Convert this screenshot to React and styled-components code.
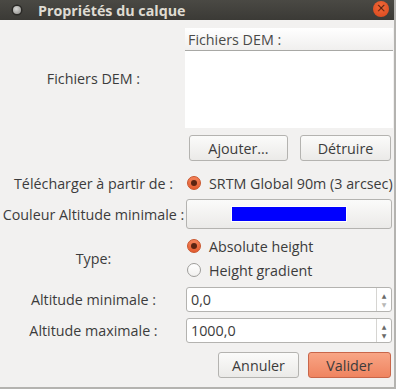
import React from 'react';
import styled, { createGlobalStyle } from 'styled-components';

const GlobalStyle = createGlobalStyle`
    body {
        margin: 0;
        background: #f2f1f0;
        font-family: "Open Sans", "DejaVu Sans", sans-serif;
        font-size: 14.3px;
        color: #3c3c3c;
    }
`;

const App = () => {
    return (
        <>
            <GlobalStyle />
            <Window>
                <TitleBar>
                    <MenuDot />
                    <Title>Propriétés du calque</Title>
                    <CloseBtn>×</CloseBtn>
                </TitleBar>
                <Body>
                    <Row $top={8} $h={100}>
                        <Label>Fichiers DEM :</Label>
                        <ListBox>
                            <ListHeader>Fichiers DEM :</ListHeader>
                        </ListBox>
                    </Row>
                    <Row $top={7} $h={26}>
                        <span />
                        <ButtonPair>
                            <Button $w={99}>Ajouter...</Button>
                            <Button $w={91}>Détruire</Button>
                        </ButtonPair>
                    </Row>
                    <Row $top={11} $h={20}>
                        <Label>Télécharger à partir de :</Label>
                        <RadioList>
                            <RadioItem>
                                <Radio $checked />
                                SRTM Global 90m (3 arcsec)
                            </RadioItem>
                        </RadioList>
                    </Row>
                    <Row $top={7} $h={30}>
                        <Label>Couleur Altitude minimale :</Label>
                        <ColorButton>
                            <Swatch />
                        </ColorButton>
                    </Row>
                    <Row $top={6} $h={46}>
                        <Label>Type:</Label>
                        <RadioList>
                            <RadioItem>
                                <Radio $checked />
                                Absolute height
                            </RadioItem>
                            <RadioItem>
                                <Radio />
                                Height gradient
                            </RadioItem>
                        </RadioList>
                    </Row>
                    <Row $top={6} $h={25}>
                        <Label>Altitude minimale :</Label>
                        <SpinBox>
                            <SpinValue>0,0</SpinValue>
                            <SpinArrows>
                                <Arrow>▲</Arrow>
                                <Arrow $dim>▼</Arrow>
                            </SpinArrows>
                        </SpinBox>
                    </Row>
                    <Row $top={6} $h={25}>
                        <Label>Altitude maximale :</Label>
                        <SpinBox>
                            <SpinValue>1000,0</SpinValue>
                            <SpinArrows>
                                <Arrow>▲</Arrow>
                                <Arrow>▼</Arrow>
                            </SpinArrows>
                        </SpinBox>
                    </Row>
                    <Footer>
                        <Button $w={81}>Annuler</Button>
                        <Button $w={83} $primary>Valider</Button>
                    </Footer>
                </Body>
            </Window>
        </>
    );
};

export default App;

const Window = styled.div`
    width: 396px;
    height: 389px;
    box-sizing: border-box;
    border-right: 2px solid #b4b3b0;
    border-bottom: 2px solid #b4b3b0;
    background: #f2f1f0;
    display: flex;
    flex-direction: column;
    overflow: hidden;
`;

const TitleBar = styled.div`
    height: 20px;
    flex: none;
    margin-right: -2px;
    background: linear-gradient(#4a4944, #3b3a36);
    display: flex;
    align-items: center;
    position: relative;
`;

const MenuDot = styled.div`
    width: 8px;
    height: 8px;
    margin-left: 13px;
    border-radius: 50%;
    background: radial-gradient(circle at 40% 35%, #d8d8d6, #8a8985);
    box-shadow: 0 0 0 1.5px #2a2926;
`;

const Title = styled.div`
    margin-left: 17px;
    font-weight: bold;
    font-size: 14.3px;
    color: #dfdbd2;
`;

const CloseBtn = styled.div`
    position: absolute;
    left: 373px;
    top: 1px;
    width: 16px;
    height: 16px;
    border-radius: 50%;
    background: radial-gradient(circle at 50% 35%, #f26a3a, #d8451b);
    color: #5a1e0c;
    font-size: 12px;
    line-height: 15px;
    text-align: center;
    font-family: "DejaVu Sans", sans-serif;
`;

const Body = styled.div`
    display: flex;
    flex-direction: column;
    padding-right: 1px;
`;

const Row = styled.div`
    display: grid;
    grid-template-columns: 185px 1fr;
    margin-top: ${(p) => p.$top}px;
    height: ${(p) => p.$h}px;
`;

const Label = styled.div`
    display: flex;
    align-items: center;
    justify-content: center;
    white-space: nowrap;
    padding-left: 2px;
`;

const ListBox = styled.div`
    background: #fff;
    display: flex;
    flex-direction: column;
`;

const ListHeader = styled.div`
    height: 23px;
    box-sizing: border-box;
    padding-left: 3px;
    display: flex;
    align-items: center;
    background: linear-gradient(#ffffff, #f0efee);
    border-bottom: 1px solid #a8a8a5;
    color: #4a4a48;
`;

const ButtonPair = styled.div`
    display: flex;
    justify-content: space-between;
    padding: 0 2px 0 4px;
`;

const Button = styled.button`
    width: ${(p) => p.$w}px;
    height: 26px;
    box-sizing: border-box;
    border-radius: 3px;
    border: 1px solid ${(p) => (p.$primary ? '#c8664a' : '#b4b3b0')};
    background: ${(p) =>
        p.$primary
            ? 'linear-gradient(#f8a585, #ef8460)'
            : 'linear-gradient(#fbfbfa, #ebeae8)'};
    font-family: inherit;
    font-size: 14.3px;
    color: #3c3c3c;
    padding: 0;
`;

const RadioList = styled.div`
    display: flex;
    flex-direction: column;
    justify-content: center;
    gap: 2px;
    padding-left: 2px;
`;

const RadioItem = styled.div`
    display: flex;
    align-items: center;
    gap: 8px;
    height: 22px;
    white-space: nowrap;
`;

const Radio = styled.span`
    width: 14px;
    height: 14px;
    flex: none;
    box-sizing: border-box;
    border-radius: 50%;
    position: relative;
    border: 1px solid ${(p) => (p.$checked ? '#c9542b' : '#9e9d9a')};
    background: ${(p) =>
        p.$checked ? 'linear-gradient(#f4835a, #e35c2f)' : 'linear-gradient(#ffffff, #f1f0ee)'};
    &::after {
        content: '';
        display: ${(p) => (p.$checked ? 'block' : 'none')};
        position: absolute;
        left: 3px;
        top: 3px;
        width: 6px;
        height: 6px;
        border-radius: 50%;
        background: #5b2412;
    }
`;

const ColorButton = styled.div`
    margin-left: 1px;
    margin-right: 1px;
    border: 1px solid #b4b3b0;
    border-radius: 3px;
    background: linear-gradient(#fbfbfa, #ebeae8);
    display: flex;
    align-items: center;
    justify-content: center;
`;

const Swatch = styled.div`
    width: 114px;
    height: 14px;
    background: #0000ff;
    outline: 1px solid #fff;
`;

const SpinBox = styled.div`
    margin-left: 1px;
    margin-right: 1px;
    border: 1px solid #b4b3b0;
    border-radius: 3px;
    background: #fff;
    display: flex;
    box-sizing: border-box;
`;

const SpinValue = styled.div`
    flex: 1;
    display: flex;
    align-items: center;
    padding-left: 4px;
    color: #3c3c3c;
`;

const SpinArrows = styled.div`
    width: 14px;
    border-left: 1px solid #d6d5d2;
    display: flex;
    flex-direction: column;
    justify-content: center;
    align-items: center;
`;

const Arrow = styled.span`
    font-size: 6px;
    line-height: 9px;
    color: ${(p) => (p.$dim ? '#b8b8b6' : '#6a6a68')};
    font-family: "DejaVu Sans", sans-serif;
`;

const Footer = styled.div`
    display: flex;
    justify-content: flex-end;
    gap: 9px;
    margin-top: 9px;
    padding-right: 2px;
`;
